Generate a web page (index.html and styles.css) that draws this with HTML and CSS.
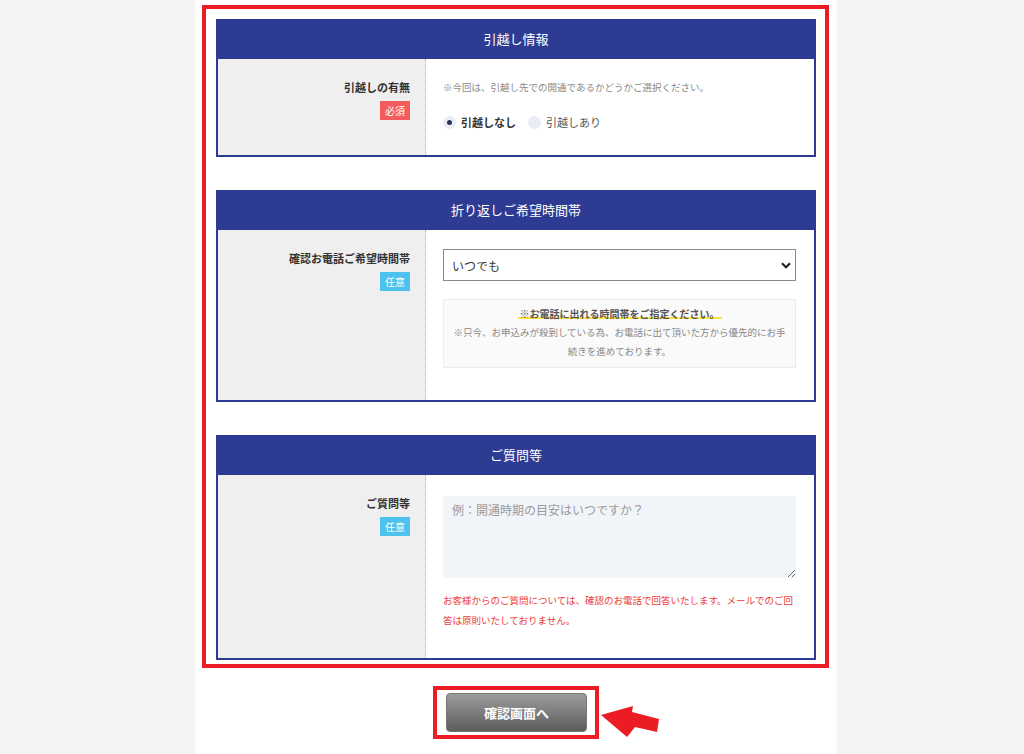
FILE: index.html
```html
<!DOCTYPE html>
<html lang="ja">
<head>
<meta charset="UTF-8">
<title>お申込みフォーム</title>
<link rel="stylesheet" href="styles.css">
</head>
<body>
<div class="page">
    <div class="frame">

        <div class="sec">
            <div class="sec-head">引越し情報</div>
            <div class="sec-row">
                <div class="sec-label">
                    <p>引越しの有無</p>
                    <span class="tag tag-req">必須</span>
                </div>
                <div class="sec-body">
                    <p class="hint">※今回は、引越し先での開通であるかどうかご選択ください。</p>
                    <div class="radios">
                        <label class="radio on"><span class="dot"></span>引越しなし</label>
                        <label class="radio"><span class="dot"></span>引越しあり</label>
                    </div>
                </div>
            </div>
        </div>

        <div class="sec">
            <div class="sec-head">折り返しご希望時間帯</div>
            <div class="sec-row">
                <div class="sec-label">
                    <p>確認お電話ご希望時間帯</p>
                    <span class="tag tag-opt">任意</span>
                </div>
                <div class="sec-body">
                    <div class="select-wrap">
                        <select class="select">
                            <option>いつでも</option>
                            <option>午前中</option>
                            <option>12時〜15時</option>
                            <option>15時〜18時</option>
                        </select>
                        <svg class="chev" width="10" height="7" viewBox="0 0 10 7"><path d="M1 1.2 L5 5.2 L9 1.2" fill="none" stroke="#222" stroke-width="2.2"/></svg>
                    </div>
                    <div class="notice">
                        <p class="notice-title"><span>※お電話に出れる時間帯をご指定ください。</span></p>
                        <p>※只今、お申込みが殺到している為、お電話に出て頂いた方から優先的にお手続きを進めております。</p>
                    </div>
                </div>
            </div>
        </div>

        <div class="sec">
            <div class="sec-head">ご質問等</div>
            <div class="sec-row">
                <div class="sec-label">
                    <p>ご質問等</p>
                    <span class="tag tag-opt">任意</span>
                </div>
                <div class="sec-body body-q">
                    <textarea class="area" placeholder="例：開通時期の目安はいつですか？"></textarea>
                    <p class="warn">お客様からのご質問については、確認のお電話で回答いたします。メールでのご回答は原則いたしておりません。</p>
                </div>
            </div>
        </div>

    </div>

    <div class="submit">
        <div class="submit-box">
            <button class="btn" type="button">確認画面へ</button>
            <svg class="arrow" width="66" height="40" viewBox="0 0 66 40"><polygon points="4,13 36,4 35,10 62,17 60,30 38,25 30,35" fill="#ec1c24"/></svg>
        </div>
    </div>
</div>
</body>
</html>
```

FILE: styles.css
```css
body {
    margin: 0;
    background-color: #f4f4f4;
    font-family: "Noto Sans CJK JP", "Noto Sans", sans-serif;
    color: #333;
}

p {
    margin: 0;
}

.page {
    width: 642px;
    margin-left: 195px;
    background-color: white;
    padding-top: 5px;
    min-height: 749px;
}

.frame {
    margin-left: 7px;
    border: 4px solid #ec1c24;
    padding: 10px 0 4px 10px;
    width: 609px;
}

.sec {
    width: 600px;
    box-sizing: border-box;
    border: 2px solid #2e3b93;
    border-top: 0;
}

.sec + .sec {
    margin-top: 33px;
}

.sec-head {
    height: 40px;
    margin: 0 -2px;
    background-color: #2e3b93;
    color: white;
    font-size: 13px;
    line-height: 40px;
    text-align: center;
}

.sec-row {
    display: flex;
}

.sec-label {
    width: 208px;
    box-sizing: border-box;
    background-color: #efefef;
    border-right: 1px dotted #b5b5b5;
    padding: 19px 15px 16px 0;
    text-align: right;
}

.sec-label p {
    font-size: 11px;
    font-weight: bold;
    line-height: 18px;
    color: #333;
}

.tag {
    display: inline-block;
    margin-top: 3px;
    padding: 0 5px;
    font-size: 10px;
    line-height: 19px;
    color: white;
}

.tag-req {
    background-color: #f25c5c;
}

.tag-opt {
    background-color: #4dc2ee;
}

.sec-body {
    flex: 1;
    padding: 19px 18px 32px 17px;
}

.hint {
    font-size: 9.5px;
    line-height: 18px;
    color: #888;
}

.radios {
    display: flex;
    gap: 12px;
    margin-top: 14px;
    margin-bottom: -11px;
}

.radio {
    display: flex;
    align-items: center;
    font-size: 11px;
    line-height: 24px;
    color: #555;
}

.radio.on {
    color: #333;
    font-weight: bold;
}

.dot {
    width: 13px;
    height: 13px;
    border-radius: 50%;
    background-color: #e9edf6;
    margin-right: 5px;
    display: flex;
    align-items: center;
    justify-content: center;
}

.radio.on .dot::after {
    content: "";
    width: 5px;
    height: 5px;
    border-radius: 50%;
    background-color: #2b3150;
}

.select-wrap {
    position: relative;
}

.select {
    display: block;
    width: 100%;
    height: 32px;
    border: 1px solid #8a8a8a;
    background-color: white;
    padding: 0 8px;
    font-family: inherit;
    font-size: 12px;
    color: #333;
    appearance: none;
    -webkit-appearance: none;
    border-radius: 0;
}

.chev {
    position: absolute;
    right: 5px;
    top: 13px;
}

.notice {
    margin-top: 18px;
    border: 1px solid #ececec;
    background-color: #fafafa;
    padding: 4px 6px 6px;
    text-align: center;
    font-size: 9.5px;
    line-height: 19px;
    color: #888;
}

.notice-title {
    font-size: 10px;
    font-weight: bold;
    color: #555;
}

.notice-title span {
    background: linear-gradient(transparent 72%, #ffe23a 72%, #ffe23a 88%, transparent 88%);
    padding: 0 2px;
}

.body-q {
    padding-top: 21px;
    padding-bottom: 28px;
}

.area {
    display: block;
    width: 100%;
    height: 82px;
    box-sizing: border-box;
    border: 0;
    background-color: #f1f4f9;
    padding: 4px 9px;
    font-family: inherit;
    font-size: 12px;
    line-height: 20px;
    resize: vertical;
}

.area::placeholder {
    color: #9a9a9a;
}

.warn {
    margin-top: 12px;
    font-size: 9.5px;
    line-height: 20px;
    color: #ee3a3a;
}

.submit {
    display: flex;
    justify-content: center;
    padding-top: 18px;
}

.submit-box {
    position: relative;
    border: 4px solid #ec1c24;
    padding: 3px 8px 3px 9px;
}

.btn {
    display: block;
    width: 141px;
    height: 39px;
    border: 1px solid #777;
    border-radius: 4px;
    background: linear-gradient(#9c9c9c, #5c5c5c);
    color: white;
    font-family: inherit;
    font-size: 13px;
    font-weight: bold;
}

.arrow {
    position: absolute;
    left: 100%;
    top: 12px;
    margin-left: 2px;
}
```
